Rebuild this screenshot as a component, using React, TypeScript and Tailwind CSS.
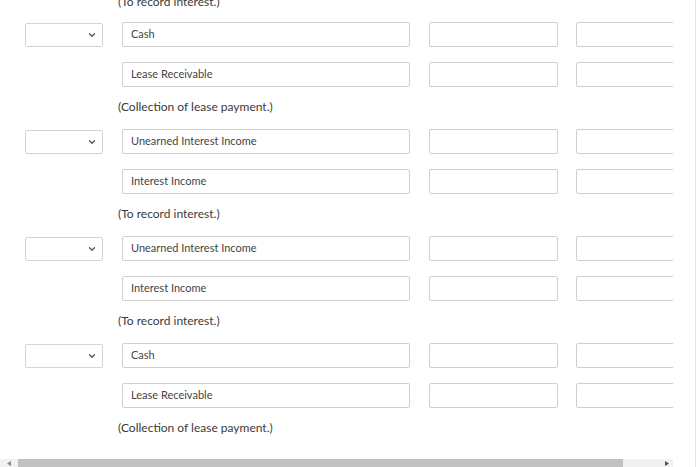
import { ChevronDown } from "lucide-react"

interface Entry {
  debit: string
  credit: string
  note: string
}

const entries: Entry[] = [
  { debit: "Cash", credit: "Lease Receivable", note: "(Collection of lease payment.)" },
  { debit: "Unearned Interest Income", credit: "Interest Income", note: "(To record interest.)" },
  { debit: "Unearned Interest Income", credit: "Interest Income", note: "(To record interest.)" },
  { debit: "Cash", credit: "Lease Receivable", note: "(Collection of lease payment.)" },
]

function Note({ text, top = 12 }: { text: string; top?: number }) {
  return (
    <div className={top === 12 ? "h-[42px] pt-[12px] pl-[118px]" : "h-[42px] pt-[14px] pl-[118px]"}>
      <p className="text-[12px] leading-[16px] text-[#3a3a3a] whitespace-nowrap">{text}</p>
    </div>
  )
}

function Row({ account, withSelect }: { account: string; withSelect: boolean }) {
  return (
    <div className="flex items-center h-[25px] pl-[25px] gap-[19px]">
      {withSelect ? (
        <div className="w-[78px] h-[24px] border border-[#d4d4d4] rounded-[2px] flex items-center justify-end pr-[5px] shrink-0">
          <ChevronDown size={10} strokeWidth={3} className="text-[#555]" />
        </div>
      ) : (
        <div className="w-[78px] shrink-0" />
      )}
      <div className="w-[288px] h-[25px] border border-[#cfcfcf] rounded-[2px] flex items-center px-[8px] shrink-0">
        <span className="text-[11px] text-[#444] whitespace-nowrap">{account}</span>
      </div>
      <div className="w-[129px] h-[25px] border border-[#cfcfcf] rounded-[2px] shrink-0" />
      <div className="w-[129px] h-[25px] border border-[#cfcfcf] rounded-[2px] shrink-0 -ml-[1px]" />
    </div>
  )
}

export default function App() {
  return (
    <div
      className="w-[700px] h-[467px] bg-white flex overflow-hidden"
      style={{ fontFamily: "Lato, 'Open Sans', sans-serif" }}
    >
      <div className="w-[673px] h-full flex flex-col shrink-0">
        <div className="flex-1 overflow-hidden">
          <div className="-mt-[20px]">
            <Note text="(To record interest.)" top={14} />
            {entries.map((e, i) => (
              <div key={i}>
                <div className="flex flex-col gap-[15px]">
                  <Row account={e.debit} withSelect />
                  <Row account={e.credit} withSelect={false} />
                </div>
                <Note text={e.note} />
              </div>
            ))}
          </div>
        </div>
        {/* horizontal scrollbar */}
        <div className="h-[8px] flex items-stretch bg-[#f1f1f1]">
          <div className="w-[18px] flex items-center justify-center">
            <svg width="5" height="5" viewBox="0 0 5 5">
              <path d="M4 0 L4 5 L0 2.5 Z" fill="#8a8a8a" />
            </svg>
          </div>
          <div className="w-[605px] bg-[#c1c1c1]" />
          <div className="flex-1 flex items-center justify-end pr-[4px]">
            <svg width="5" height="5" viewBox="0 0 5 5">
              <path d="M1 0 L1 5 L5 2.5 Z" fill="#505050" />
            </svg>
          </div>
        </div>
      </div>
      <div className="w-[22px] shrink-0" />
      <div className="w-[1px] h-full bg-[#e4e4e4] shrink-0" />
    </div>
  )
}
